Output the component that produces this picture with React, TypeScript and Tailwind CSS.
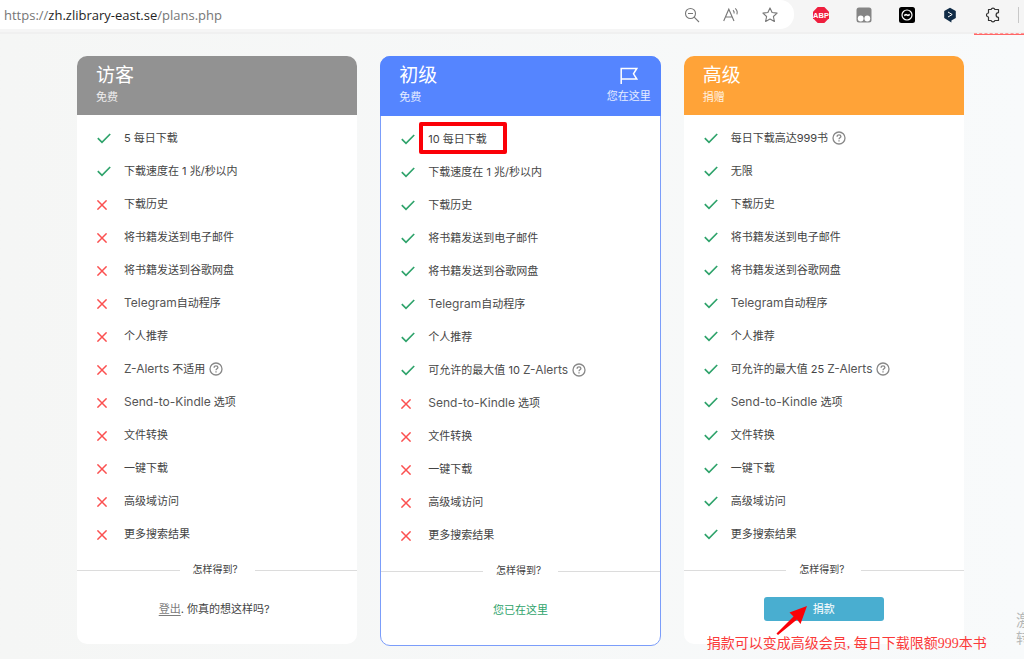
import React from "react";

type Feature = { text: string; ok: boolean; help?: boolean; marked?: boolean };

type Plan = {
  name: string;
  price: string;
  header: string;
  card: string;
  current?: boolean;
  features: Feature[];
  action: React.ReactNode;
};

const common = [
  "下载历史",
  "将书籍发送到电子邮件",
  "将书籍发送到谷歌网盘",
  "Telegram自动程序",
  "个人推荐",
];
const extras = ["Send-to-Kindle 选项", "文件转换", "一键下载", "高级域访问", "更多搜索结果"];

const list = (texts: string[], ok: boolean): Feature[] => texts.map((text) => ({ text, ok }));

function Check() {
  return (
    <svg viewBox="0 0 14 11" className="h-[11px] w-[14px]" fill="none" stroke="#2fa36b" strokeWidth="1.7" aria-hidden="true">
      <path d="M0.8 5.2 5 9.3 13.2 1" />
    </svg>
  );
}

function Cross() {
  return (
    <svg viewBox="0 0 10 10" className="h-[10px] w-[10px]" fill="none" stroke="#fb5050" strokeWidth="1.5" aria-hidden="true">
      <path d="M0.4 0.4 9.6 9.6M9.6 0.4 0.4 9.6" />
    </svg>
  );
}

function Help() {
  return (
    <svg viewBox="0 0 14 14" className="h-[14px] w-[14px] shrink-0" fill="none" stroke="#888888" strokeWidth="1.3" aria-hidden="true">
      <circle cx="7" cy="7" r="6" />
      <path d="M5.1 5.7C5.1 4.5 6 3.9 7 3.9s1.9.6 1.9 1.6C8.9 6.8 7 6.8 7 8.2M7 9.3v1.3" />
    </svg>
  );
}

function DonateArrow() {
  return (
    <svg viewBox="0 0 32 30" className="pointer-events-none absolute top-[8px] left-[12px] h-[30px] w-[32px]" fill="#fb0007" aria-hidden="true">
      <path d="M31 1 13.5 7.5 17.5 11.5 0.5 28.5 2 30 21 14.5 24.5 19Z" />
    </svg>
  );
}

const plans: Plan[] = [
  {
    name: "访客",
    price: "免费",
    header: "h-[59px] bg-[#929292]",
    card: "",
    features: [
      ...list(["5 每日下载", "下载速度在 1 兆/秒以内"], true),
      ...list(common, false),
      { text: "Z-Alerts 不适用", ok: false, help: true },
      ...list(extras, false),
    ],
    action: (
      <p className="pr-1.5">
        <a href="#logout" className="text-[#7c7c7c] underline underline-offset-2">登出</a>. 你真的想这样吗?
      </p>
    ),
  },
  {
    name: "初级",
    price: "免费",
    header: "-mx-px -mt-px h-[60px] bg-[#5585ff]",
    card: "border border-[#7b9dfa]",
    current: true,
    features: [
      { text: "10 每日下载", ok: true, marked: true },
      ...list(["下载速度在 1 兆/秒以内", ...common], true),
      { text: "可允许的最大值 10 Z-Alerts", ok: true, help: true },
      ...list(extras, false),
    ],
    action: <p className="text-[#2fa36b]">您已在这里</p>,
  },
  {
    name: "高级",
    price: "捐赠",
    header: "h-[59px] bg-[#ffa338]",
    card: "",
    features: [
      { text: "每日下载高达999书", ok: true, help: true },
      ...list(["无限", ...common], true),
      { text: "可允许的最大值 25 Z-Alerts", ok: true, help: true },
      ...list(extras, true),
    ],
    action: (
      <div className="relative">
        <button type="button" className="h-6 w-[120px] rounded-[3px] bg-[#49aed0] text-white">捐款</button>
        <DonateArrow />
        <p className="absolute top-[37px] left-[-57px] font-['Liberation_Serif','Noto_Sans_CJK_SC',serif] text-[14px] leading-5 whitespace-nowrap text-[#fb3a3a]">
          捐款可以变成高级会员, 每日下载限额999本书
        </p>
      </div>
    ),
  },
];

function FeatureText({ text }: { text: string }) {
  return (
    <span>
      {text.split(/([A-Za-z][A-Za-z-]+)/).map((part, i) =>
        i % 2 ? <span key={i} className="text-[12px] text-[#555555]">{part}</span> : part
      )}
    </span>
  );
}

function FeatureRow({ text, ok, help, marked }: Feature) {
  return (
    <li className="flex h-[33px] items-center">
      <span className="w-[27px] pt-0.5">{ok ? <Check /> : <Cross />}</span>
      <span className="relative flex items-center gap-1">
        <FeatureText text={text} />
        {help && <Help />}
        {marked && <span className="absolute -top-[9px] -left-[9px] h-[32px] w-[88px] rounded-[2px] border-4 border-[#fb0007]" />}
      </span>
    </li>
  );
}

function PlanCard({ plan }: { plan: Plan }) {
  return (
    <section className={`rounded-[10px] bg-white ${plan.card}`}>
      <header className={`flex justify-between rounded-t-[10px] pr-[10px] pl-[19px] text-white ${plan.header}`}>
        <div>
          <h2 className="pt-[7px] text-[19px] leading-[26px]">{plan.name}</h2>
          <p className="leading-[17px] text-white/85">{plan.price}</p>
        </div>
        {plan.current && (
          <div className="flex flex-col items-center pt-[11px]">
            <svg viewBox="0 0 18 17" className="h-[17px] w-[18px]" fill="none" stroke="white" strokeWidth="1.5" aria-hidden="true">
              <path d="M1.2 17V1.5h15.6L13.5 6.8l3.3 5.2H1.2" />
            </svg>
            <p className="pt-1 leading-[17px] text-white/85">您在这里</p>
          </div>
        )}
      </header>
      <ul className="pt-[6px] pl-5">
        {plan.features.map((feature) => (
          <FeatureRow key={feature.text} {...feature} />
        ))}
      </ul>
      <div className="flex h-10 items-center">
        <span className="h-px flex-1 bg-[#dcdcdc]" />
        <span className="w-[75px] pr-1 pb-0.5 text-center text-[10px]">怎样得到?</span>
        <span className="h-px flex-1 bg-[#dcdcdc]" />
      </div>
      <div className="flex h-[54px] items-start justify-center pt-[7px]">
        <div className="flex h-6 items-center">{plan.action}</div>
      </div>
    </section>
  );
}

function Toolbar() {
  return (
    <header className="flex h-[34px] items-start border-b-2 border-[#f0f0f0] bg-[#f5f5f5]">
      <div className="flex h-[29px] flex-1 items-center rounded-r-[14px] bg-white pr-4 pl-1 font-['Open_Sans',sans-serif] text-[13px] text-[#767676]">
        <span className="flex-1">https://<span className="text-[#1f1f1f]">zh.zlibrary-east.se</span>/plans.php</span>
        <div className="flex items-center gap-[23px]">
          <svg viewBox="0 0 16 16" className="h-4 w-4" fill="none" stroke="#777" strokeWidth="1.1" aria-label="缩小">
            <circle cx="6.5" cy="6.5" r="5" /><path d="M10.2 10.2 15 15M4 6.5h5" />
          </svg>
          <svg viewBox="0 0 16 16" className="h-4 w-4" fill="none" stroke="#777" strokeWidth="1.1" aria-label="朗读">
            <path d="M.7 14 5.8 2.2 11 14M2.5 10h6.7M10 3.2c1 .8 1.4 2 1.1 3.3M12.2 1.4c1.8 1.5 2.4 3.7 1.7 5.9" />
          </svg>
          <svg viewBox="0 0 16 16" className="h-4 w-4" fill="none" stroke="#777" strokeWidth="1.1" strokeLinejoin="round" aria-label="收藏">
            <path d="m8 .9 2.1 4.6 5 .6-3.7 3.4 1 5L8 12l-4.4 2.5 1-5L.9 6.1l5-.6Z" />
          </svg>
        </div>
      </div>
      <div className="flex h-[29px] items-center gap-[27px] pr-[5px] pl-[19px]">
        <svg viewBox="0 0 16 16" className="h-4 w-4" aria-label="ABP">
          <path d="M4.7 0h6.6L16 4.7v6.6L11.3 16H4.7L0 11.3V4.7Z" fill="#ef1f3e" />
          <text x="8" y="10.8" textAnchor="middle" fontSize="7.5" fontWeight="700" fontFamily="Liberation Sans Narrow, Liberation Sans" fill="white">ABP</text>
        </svg>
        <svg viewBox="0 0 16 16" className="h-4 w-4" aria-hidden="true">
          <rect x=".5" y=".5" width="15" height="15" rx="2.5" fill="#858585" />
          <circle cx="4.7" cy="11.5" r="2.9" fill="#fff" /><circle cx="11.3" cy="11.5" r="2.9" fill="#fff" />
        </svg>
        <svg viewBox="0 0 16 16" className="h-4 w-4" aria-hidden="true">
          <rect width="16" height="16" rx="2.5" fill="#000" />
          <circle cx="8" cy="8" r="5" fill="none" stroke="white" strokeWidth="1.2" /><path d="M5.2 8.5 7 7.5l2 1 1.8-1" fill="none" stroke="white" strokeWidth="1.5" />
        </svg>
        <svg viewBox="0 0 16 16" className="h-4 w-4" aria-hidden="true">
          <path d="m8 .8 5.8 3.3v6.8L9.4 13.4v2.2L2.2 10.9V4.1Z" fill="#102b46" />
          <path d="m6 5 4.2 2.5L6 10" fill="none" stroke="white" />
        </svg>
        <svg viewBox="0 0 16 16" className="h-4 w-4" fill="none" stroke="#333" strokeWidth="1.2" strokeLinejoin="round" aria-label="扩展">
          <path d="M3.5 2.5h2.6a2 2 0 0 1 3.8 0h3.6v3.1a2 2 0 1 0 0 4.8v3.1H9.9a2 2 0 0 1-3.8 0H3.5V10a2 2 0 0 1 0-4Z" />
        </svg>
        <span className="-ml-2.5 h-4 w-px bg-[#c8c8c8]" />
      </div>
    </header>
  );
}

export default function App() {
  return (
    <div className="relative min-h-screen overflow-hidden bg-linear-to-r from-[#f5f6f5] to-[#f8fafb] font-['Inter','Noto_Sans_CJK_SC',sans-serif] text-[11px] leading-4 text-[#444444]">
      <Toolbar />
      <span className="absolute top-[33px] right-0 h-[2px] w-[50px] border-t border-b border-t-[#f99] border-b-[#f66] [border-top-style:dashed]" />
      <main className="grid grid-cols-3 items-start gap-x-[23px] pt-[22px] pr-[60px] pb-3 pl-[77px]">
        {plans.map((plan) => (
          <PlanCard key={plan.name} plan={plan} />
        ))}
      </main>
      <aside className="absolute top-[611px] -right-[8px] text-[16px] leading-[18px] text-[#b5b8b8]">
        <p>激</p>
        <p className="text-[14px]">转</p>
      </aside>
    </div>
  );
}
